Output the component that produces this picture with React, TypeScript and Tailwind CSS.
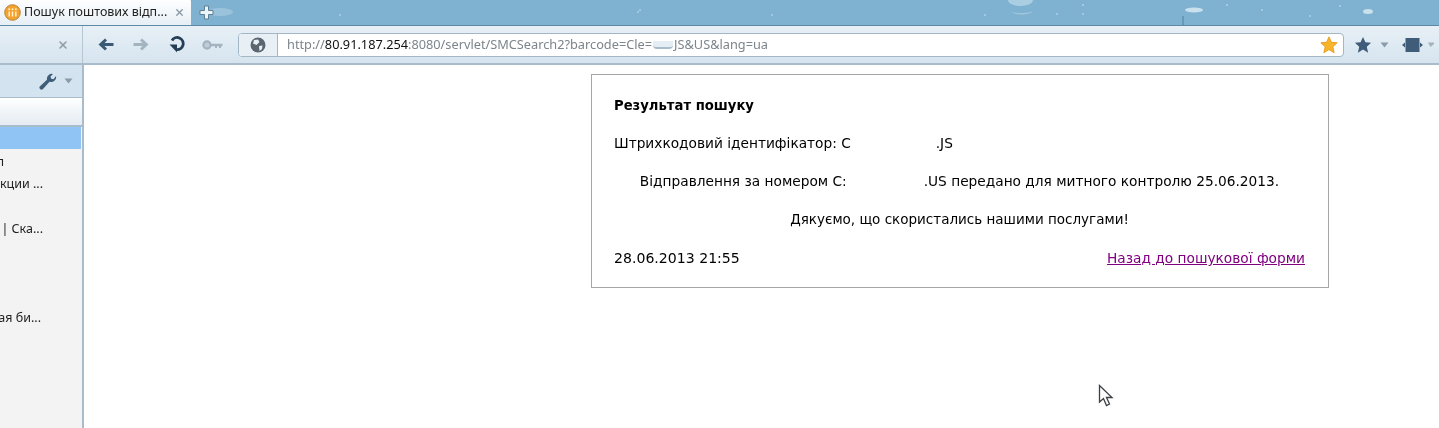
import React from "react";
import { X } from "lucide-react";

const FONT_UI = "font-['Noto_Sans','Open_Sans',sans-serif]";

const sideRows = [
  { id: 2, text: "л", cls: "pr-[78px]" },
  { id: 3, text: "кции ...", cls: "pr-[39px]" },
  { id: 4, text: "", cls: "" },
  { id: 5, text: "| Ска...", cls: "pr-[39px]" },
  { id: 6, text: "", cls: "" },
  { id: 7, text: "", cls: "" },
  { id: 8, text: "", cls: "" },
  { id: 9, text: "ая би...", cls: "pr-[41px]" },
];

function BackIcon({ color }: { color: string }) {
  return (
    <svg width="16" height="13" viewBox="0 0 16 13">
      <path d="M7 0.5 L0.5 6.5 L7 12.5 L9 10.5 L6.5 8 H15.5 V5 H6.5 L9 2.5 Z" fill={color} />
    </svg>
  );
}

function StarIcon({ size, fill, stroke }: { size: number; fill: string; stroke?: string }) {
  return (
    <svg width={size} height={size} viewBox="0 0 20 20">
      <path
        d="M10 1 L12.7 7 L19 7.6 L14.2 12 L15.7 18.6 L10 15.1 L4.3 18.6 L5.8 12 L1 7.6 L7.3 7 Z"
        fill={fill}
        stroke={stroke}
        strokeWidth={stroke ? 1 : 0}
      />
    </svg>
  );
}

function Caret() {
  return (
    <svg width="9" height="6" viewBox="0 0 9 6">
      <path d="M0.5 0.5 H8.5 L4.5 5.5 Z" fill="#8a9cab" />
    </svg>
  );
}

function TabBar() {
  return (
    <div className="relative flex h-[26px] items-end overflow-hidden border-b border-[#5f8aa5] bg-[#7fb2d0]">
      {/* background decoration of the browser theme */}
      <svg className="absolute left-0 top-0" width="1439" height="26">
        <ellipse cx="220" cy="12" rx="13" ry="4" fill="#bcd8e8" opacity="0.45" />
        <path d="M1008 0 H1033 A12.500 6 0 0 1 1008 0 Z" fill="#b5d5e6" opacity="0.8" />
        <path d="M1011 12 A12 5 0 0 0 1033 11 A14 4 0 0 1 1011 12 Z" fill="#a6cade" opacity="0.8" />
        <ellipse cx="1194" cy="10" rx="9" ry="2.500" fill="#d2e5ef" opacity="0.9" />
        <ellipse cx="1368" cy="11.500" rx="5" ry="2.500" fill="#d2e5ef" opacity="0.9" />
        <path d="M1183 16 V25" stroke="#4e7f9e" strokeWidth="1" />
        <circle cx="640" cy="10" r="0.8" fill="#d3e6f0" />
        <circle cx="638" cy="12" r="0.8" fill="#d3e6f0" />
        <circle cx="772" cy="15" r="0.8" fill="#d3e6f0" />
        <circle cx="340" cy="15" r="0.8" fill="#d3e6f0" />
        <circle cx="1083" cy="5" r="0.8" fill="#d3e6f0" />
        <circle cx="1057" cy="14" r="0.8" fill="#d3e6f0" />
        <circle cx="1083" cy="14" r="0.8" fill="#d3e6f0" />
        <circle cx="1227" cy="5" r="0.8" fill="#d3e6f0" />
        <circle cx="1262" cy="10" r="0.8" fill="#d3e6f0" />
        <circle cx="1310" cy="16" r="0.8" fill="#d3e6f0" />
        <circle cx="1340" cy="6" r="0.8" fill="#d3e6f0" />
        <circle cx="985" cy="15" r="0.8" fill="#d3e6f0" />
      </svg>
      <div className="relative flex h-[26px] w-[191px] items-center rounded-tr-[3px] bg-gradient-to-b from-white to-[#e6eff6] pl-[4px]">
        <svg width="17" height="17" viewBox="0 0 17 17" className="shrink-0">
          <circle cx="8.500" cy="8.500" r="7.800" fill="#f5a12a" stroke="#b9853f" />
          <path d="M5.200 7.500 V12.500 M8.500 7.500 V12.500 M11.800 7.500 V12.500" stroke="#fff3d8" strokeWidth="1.500" />
          <circle cx="5.200" cy="5.200" r="1" fill="#fff3d8" />
          <circle cx="8.500" cy="5.200" r="1" fill="#fff3d8" />
          <circle cx="11.800" cy="5.200" r="1" fill="#fff3d8" />
        </svg>
        <span className={`ml-[3px] text-[12.5px] leading-none whitespace-nowrap text-[#222] ${FONT_UI}`}>
          Пошук поштових відп...
        </span>
        <X size={11} strokeWidth={3} className="ml-[7px] shrink-0 text-[#8b99a5]" />
      </div>
      <svg className="relative ml-[8px] mb-[5px]" width="15" height="15" viewBox="0 0 15 15">
        <path d="M5.500 1 H9.500 V5.500 H14 V9.500 H9.500 V14 H5.500 V9.500 H1 V5.500 H5.500 Z" fill="#eef5f9" stroke="#5d7f96" />
      </svg>
    </div>
  );
}

function Toolbar() {
  return (
    <div className="flex h-[39px] items-center border-b-2 border-[#a9bccb] bg-gradient-to-b from-[#e8f0f6] to-[#d6e4ef]">
      <div className="flex h-full w-[83px] shrink-0 items-center justify-end border-r border-[#b6c6d3] pr-[13px]">
        <X size={12} strokeWidth={3.2} className="text-[#8f9da9]" />
      </div>
      <div className="ml-[15px] flex w-[140px] shrink-0 items-center">
        <BackIcon color="#3b5a75" />
        <div className="ml-[19px] -scale-x-100">
          <BackIcon color="#a3b3c0" />
        </div>
        <svg className="ml-[20px]" width="17" height="17" viewBox="0 0 17 17">
          <path d="M3 4.500 A6 6 0 1 1 7.500 13.500" fill="none" stroke="#243f55" strokeWidth="2.800" />
          <path d="M0.500 8.500 H8 V16.500 Z" fill="#243f55" />
        </svg>
        <svg className="ml-[16px]" width="21" height="10" viewBox="0 0 21 10">
          <circle cx="5" cy="5" r="3.600" fill="#c0ccd6" stroke="#a3b3c0" strokeWidth="2.200" />
          <path d="M8 3.800 H20.500 V6.200 H19 V8 H17 V6.200 H15 V8 H13 V6.200 H8 Z" fill="#a3b3c0" />
        </svg>
      </div>
      <div className="flex h-[24px] w-[1106px] shrink-0 overflow-hidden rounded-[4px] border border-[#a2b6c6] bg-white">
        <div className="flex w-[39px] shrink-0 items-center justify-center border-r border-[#a2b6c6] bg-[#e8eff5]">
          <svg width="16" height="16" viewBox="0 0 16 16">
            <circle cx="8" cy="8" r="7.500" fill="#5b6670" />
            <path d="M4 3 L8 2.500 L9.500 5 L6.500 8 L3 6.500 Z M9 9 L12.500 8.500 L12 12 L9.500 14 Z" fill="#e8eff5" />
          </svg>
        </div>
        <div className={`flex flex-1 items-center pl-[9px] pr-[5px] text-[12.75px] leading-none whitespace-nowrap text-[#7c858c] ${FONT_UI}`}>
          <span>http://</span>
          <span className="text-[#111]">80.91.187.254</span>
          <span>:8080/servlet/SMCSearch2?barcode=Cle=</span>
          <span className="mx-[1px] h-[8px] w-[20px] rounded-b-[4px] border-b-2 border-[#a9bccb] bg-[#e6eef5]" />
          <span>JS&amp;US&amp;lang=ua</span>
          <span className="ml-auto">
            <StarIcon size={18} fill="#f7b52a" stroke="#e8971a" />
          </span>
        </div>
      </div>
      <div className="ml-[10px] flex items-center">
        <StarIcon size={18} fill="#3f5c78" />
        <span className="ml-[8px] flex">
          <Caret />
        </span>
        <svg className="ml-[13px]" width="21" height="16" viewBox="0 0 21 16">
          <path d="M3.500 1 H17.500 V15 H3.500 Z" fill="#3f5c78" />
          <path d="M0 8 L3 5.500 V10.500 Z M21 8 L18 5.500 V10.500 Z" fill="#3f5c78" />
        </svg>
        <svg className="ml-[5px]" width="6" height="6" viewBox="0 0 6 6">
          <path d="M0 0.500 H6 V2 L2.500 5 Z" fill="#a3b3c0" />
        </svg>
      </div>
    </div>
  );
}

function Sidebar() {
  return (
    <aside className={`flex w-[84px] shrink-0 flex-col border-r-2 border-[#a9bccb] bg-[#f3f3f3] ${FONT_UI}`}>
      <div className="flex h-[33px] items-center justify-end border-b border-[#a9bccb] bg-[#d3e3ef] pr-[9px]">
        <svg width="18" height="17" viewBox="0 0 18 17">
          <path
            d="M17 3 A5 5 0 0 1 10.500 8.800 L4 16 A2 2 0 0 1 1 13.200 L8 6.800 A5 5 0 0 1 14 1 L11.500 3.600 L12.200 5.800 L14.500 6.200 Z"
            fill="#3f5c78"
          />
        </svg>
        <span className="ml-[7px] flex">
          <Caret />
        </span>
      </div>
      <div className="h-[29px] border-b-2 border-[#a9bccb] bg-gradient-to-b from-white to-[#e4ebf1]" />
      <div className="mr-[1px] h-[22px] bg-[#90c4f5]" />
      <div className="mt-[2px] flex flex-col">
        {sideRows.map((row) => (
          <div
            key={row.id}
            className={`flex h-[22.3px] items-center justify-end overflow-hidden text-[12.5px] leading-none whitespace-nowrap text-[#222] ${row.cls}`}
          >
            {row.text}
          </div>
        ))}
      </div>
    </aside>
  );
}

function ResultCard() {
  return (
    <div className="ml-[507px] mt-[9px] h-[214px] w-[738px] border border-[#a6a6a6] bg-white pl-[22px] pr-[23px] pt-[12px] font-['DejaVu_Sans','Verdana',sans-serif] text-[13.72px] text-black">
      <div className="flex h-[37px] items-center text-[13.2px] font-bold">Результат пошуку</div>
      <div className="flex h-[38px] items-center whitespace-pre">
        Штрихкодовий ідентифікатор: C<span className="w-[85px]" />.JS
      </div>
      <div className="flex h-[38px] items-center justify-center whitespace-pre">
        Відправлення за номером C:<span className="w-[77px]" />.US передано для митного контролю 25.06.2013.
      </div>
      <div className="flex h-[38px] items-center justify-center text-[13.5px]">
        Дякуємо, що скористались нашими послугами!
      </div>
      <div className="flex h-[38px] items-baseline justify-between pt-[10px]">
        <span className="text-[14.1px]">28.06.2013 21:55</span>
        <a href="#" className="text-[#800080] underline">
          Назад до пошукової форми
        </a>
      </div>
    </div>
  );
}

export default function App() {
  return (
    <div className="relative flex h-[428px] w-[1439px] flex-col overflow-hidden bg-white blur-[0.35px]">
      <TabBar />
      <Toolbar />
      <div className="flex min-h-0 flex-1">
        <Sidebar />
        <main className="flex-1 bg-white">
          <ResultCard />
        </main>
      </div>
      {/* mouse pointer from the screen grab */}
      <svg className="absolute left-[1098px] top-[384px]" width="17" height="24" viewBox="0 0 17 24">
        <path d="M1.500 1.500 V18 L5.500 14.500 L8.500 21.500 L11.500 20 L8.500 13.500 H14 Z" fill="#fff" stroke="#3a3f45" strokeWidth="1.300" />
      </svg>
    </div>
  );
}
